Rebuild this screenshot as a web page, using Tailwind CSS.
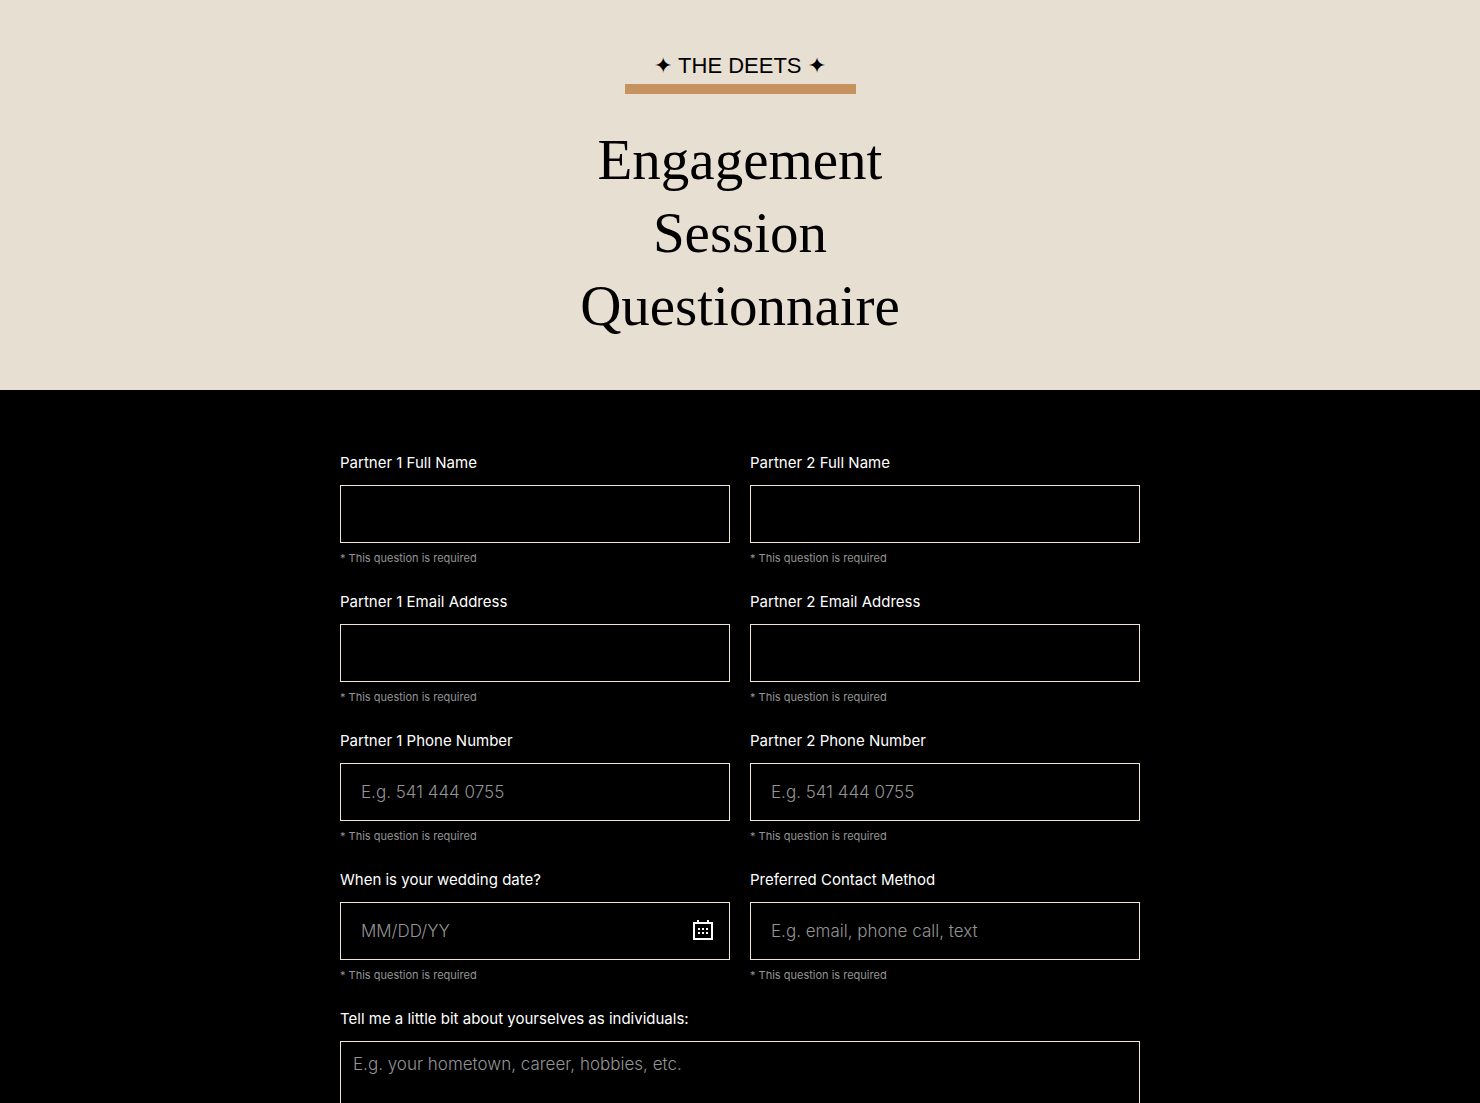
<!DOCTYPE html>
<html lang="en">
<head>
<meta charset="utf-8">
<meta name="viewport" content="width=device-width, initial-scale=1">
<title>Engagement Session Questionnaire</title>
<script src="https://cdn.jsdelivr.net/npm/@tailwindcss/browser@4"></script>
</head>
<body class="bg-black font-['Inter','DejaVu_Sans',sans-serif] text-white">
<header class="flex flex-col items-center bg-[#e7dfd2] px-5 pt-12 pb-12 text-center text-black">
  <p class="w-[231px] border-b-10 border-[#c69260] font-['Liberation_Sans','DejaVu_Sans',sans-serif] text-[22px] leading-9">✦ THE DEETS ✦</p>
  <h1 class="mt-[29px] w-[360px] font-['Liberation_Serif',serif] text-[57px] leading-[73px] font-normal">Engagement Session Questionnaire</h1>
</header>
<main class="mx-auto w-full max-w-[840px] px-5 pt-[61px]">
  <form class="grid grid-cols-1 gap-x-5 gap-y-[23px] sm:grid-cols-2">
    <div class="flex flex-col">
      <label for="name1" class="text-[15px] leading-6">Partner 1 Full Name</label>
      <input id="name1" type="text" required class="mt-2.5 h-[58px] w-full border border-[#f0e4d2] bg-black px-5 text-[17px] font-light outline-none placeholder:text-[#949494]">
      <p class="mt-1.5 text-[11px] leading-[18px] text-[#949494]">* This question is required</p>
    </div>
    <div class="flex flex-col">
      <label for="name2" class="text-[15px] leading-6">Partner 2 Full Name</label>
      <input id="name2" type="text" required class="mt-2.5 h-[58px] w-full border border-[#f0e4d2] bg-black px-5 text-[17px] font-light outline-none placeholder:text-[#949494]">
      <p class="mt-1.5 text-[11px] leading-[18px] text-[#949494]">* This question is required</p>
    </div>
    <div class="flex flex-col">
      <label for="email1" class="text-[15px] leading-6">Partner 1 Email Address</label>
      <input id="email1" type="email" required class="mt-2.5 h-[58px] w-full border border-[#f0e4d2] bg-black px-5 text-[17px] font-light outline-none placeholder:text-[#949494]">
      <p class="mt-1.5 text-[11px] leading-[18px] text-[#949494]">* This question is required</p>
    </div>
    <div class="flex flex-col">
      <label for="email2" class="text-[15px] leading-6">Partner 2 Email Address</label>
      <input id="email2" type="email" required class="mt-2.5 h-[58px] w-full border border-[#f0e4d2] bg-black px-5 text-[17px] font-light outline-none placeholder:text-[#949494]">
      <p class="mt-1.5 text-[11px] leading-[18px] text-[#949494]">* This question is required</p>
    </div>
    <div class="flex flex-col">
      <label for="phone1" class="text-[15px] leading-6">Partner 1 Phone Number</label>
      <input id="phone1" type="tel" required placeholder="E.g. 541 444 0755" class="mt-2.5 h-[58px] w-full border border-[#f0e4d2] bg-black px-5 text-[17px] font-light outline-none placeholder:text-[#949494]">
      <p class="mt-1.5 text-[11px] leading-[18px] text-[#949494]">* This question is required</p>
    </div>
    <div class="flex flex-col">
      <label for="phone2" class="text-[15px] leading-6">Partner 2 Phone Number</label>
      <input id="phone2" type="tel" required placeholder="E.g. 541 444 0755" class="mt-2.5 h-[58px] w-full border border-[#f0e4d2] bg-black px-5 text-[17px] font-light outline-none placeholder:text-[#949494]">
      <p class="mt-1.5 text-[11px] leading-[18px] text-[#949494]">* This question is required</p>
    </div>
    <div class="flex flex-col">
      <label for="date" class="text-[15px] leading-6">When is your wedding date?</label>
      <div class="mt-2.5 flex h-[58px] items-center border border-[#f0e4d2] pr-4">
        <input id="date" type="text" required placeholder="MM/DD/YY" class="h-full min-w-0 flex-1 bg-black px-5 text-[17px] font-light outline-none placeholder:text-[#949494]">
        <button type="button" aria-label="Choose a date" class="pb-0.5">
          <svg class="block h-5 w-5" viewBox="0 0 20 20" fill="#fff" shape-rendering="crispEdges" aria-hidden="true">
            <path fill-rule="evenodd" d="M4 0h2v2h8V0h2v2h4v18H0V2h4zM2 4v14h16V4z"/>
            <path d="M5 8h2v2H5zM9 8h2v2H9zM13 8h2v2h-2zM5 12h2v2H5zM9 12h2v2H9zM13 12h2v2h-2z"/>
          </svg>
        </button>
      </div>
      <p class="mt-1.5 text-[11px] leading-[18px] text-[#949494]">* This question is required</p>
    </div>
    <div class="flex flex-col">
      <label for="contact" class="text-[15px] leading-6">Preferred Contact Method</label>
      <input id="contact" type="text" required placeholder="E.g. email, phone call, text" class="mt-2.5 h-[58px] w-full border border-[#f0e4d2] bg-black px-5 text-[17px] font-light outline-none placeholder:text-[#949494]">
      <p class="mt-1.5 text-[11px] leading-[18px] text-[#949494]">* This question is required</p>
    </div>
    <div class="flex flex-col sm:col-span-2">
      <label for="about" class="text-[15px] leading-6">Tell me a little bit about yourselves as individuals:</label>
      <textarea id="about" placeholder="E.g. your hometown, career, hobbies, etc." class="mt-2.5 h-36 w-full resize-none border border-[#f0e4d2] bg-black px-3 py-2 text-[17px] leading-7 font-light outline-none placeholder:text-[#949494]"></textarea>
    </div>
  </form>
</main>
</body>
</html>
